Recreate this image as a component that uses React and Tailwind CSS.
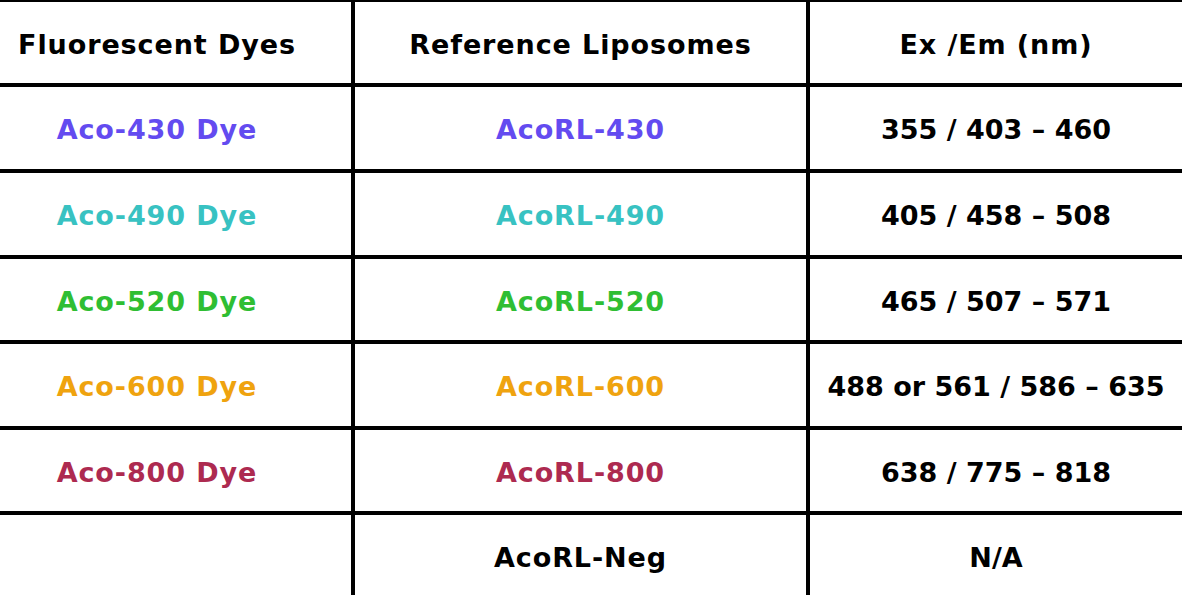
const rows = [
  { dye: 'Aco-430 Dye', lipo: 'AcoRL-430', range: '355 / 403 – 460', color: 'text-[#634bf0]', h: 'h-[82px]' },
  { dye: 'Aco-490 Dye', lipo: 'AcoRL-490', range: '405 / 458 – 508', color: 'text-[#38c2c2]', h: 'h-[82px]' },
  { dye: 'Aco-520 Dye', lipo: 'AcoRL-520', range: '465 / 507 – 571', color: 'text-[#2fbe33]', h: 'h-[81px]' },
  { dye: 'Aco-600 Dye', lipo: 'AcoRL-600', range: '488 or 561 / 586 – 635', color: 'text-[#efa30f]', h: 'h-[82px]' },
  { dye: 'Aco-800 Dye', lipo: 'AcoRL-800', range: '638 / 775 – 818', color: 'text-[#ad2a50]', h: 'h-[81px]' },
  { dye: '', lipo: 'AcoRL-Neg', range: 'N/A', color: 'text-black', h: 'h-[82px]' },
];

const cell = 'bg-white flex items-center justify-center whitespace-nowrap pt-[5px]';

export default function App() {
  return (
    <div
      className="w-[1182px] h-[595px] overflow-hidden bg-white font-bold text-[27px] tracking-[0.9px]"
      style={{ fontFamily: '"DejaVu Sans", sans-serif' }}
    >
      <div className="grid grid-cols-[351px_451px_1fr] gap-[4px] bg-black pt-[2px]">
        <div className={`${cell} h-[81px] pr-[37px] text-black`}>Fluorescent Dyes</div>
        <div className={`${cell} h-[81px] text-black`}>Reference Liposomes</div>
        <div className={`${cell} h-[81px] text-black`}>Ex /Em (nm)</div>
        {rows.map((r) => (
          <div key={r.lipo} className="contents">
            <div className={`${cell} ${r.h} pr-[37px] ${r.color}`}>{r.dye}</div>
            <div className={`${cell} ${r.h} ${r.color}`}>{r.lipo}</div>
            <div className={`${cell} ${r.h} text-black tracking-normal`}>{r.range}</div>
          </div>
        ))}
      </div>
    </div>
  );
}
